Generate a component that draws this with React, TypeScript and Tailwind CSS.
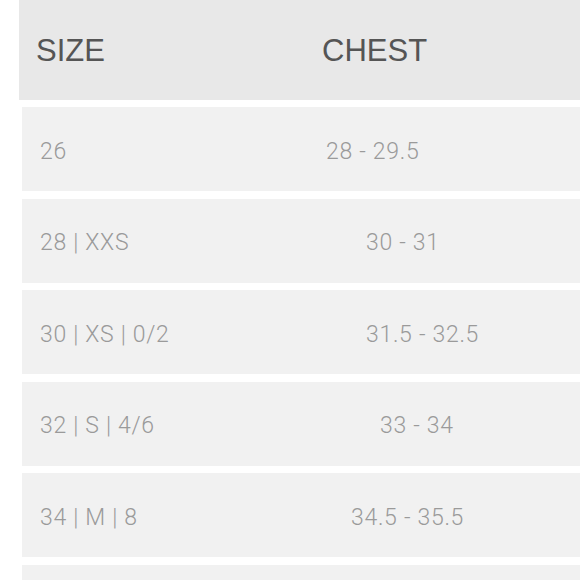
import React from "react";

type Row = {
  size: string;
  chest: string;
  pad: string;
};

const rows: Row[] = [
  { size: "26", chest: "28 - 29.5", pad: "pl-[304px]" },
  { size: "28 | XXS", chest: "30 - 31", pad: "pl-[344px]" },
  { size: "30 | XS | 0/2", chest: "31.5 - 32.5", pad: "pl-[344px]" },
  { size: "32 | S | 4/6", chest: "33 - 34", pad: "pl-[358px]" },
  { size: "34 | M | 8", chest: "34.5 - 35.5", pad: "pl-[329px]" },
  { size: "", chest: "", pad: "" },
];

function App() {
  return (
    <div className="w-[580px] h-[580px] overflow-hidden bg-white font-['Roboto','Liberation_Sans',sans-serif]">
      <div className="ml-[19px] h-[100px] pt-[2px] bg-[#e8e8e8] flex items-center text-[#555555] text-[31px] font-['Liberation_Sans',Arial,sans-serif]">
        <span className="pl-[17px] w-[303px]">SIZE</span>
        <span>CHEST</span>
      </div>
      <div className="flex flex-col gap-[7.5px] pt-[7px] ml-[22px]">
        {rows.map((r, i) => (
          <div
            key={i}
            className="relative h-[84px] pt-[6px] shrink-0 bg-[#f1f1f1] flex items-center text-[23px] font-light tracking-[0.7px] text-[#9a9a9a]"
          >
            <span className="absolute left-[18px]">{r.size}</span>
            <span className={r.pad}>{r.chest}</span>
          </div>
        ))}
      </div>
    </div>
  );
}

export default App;
